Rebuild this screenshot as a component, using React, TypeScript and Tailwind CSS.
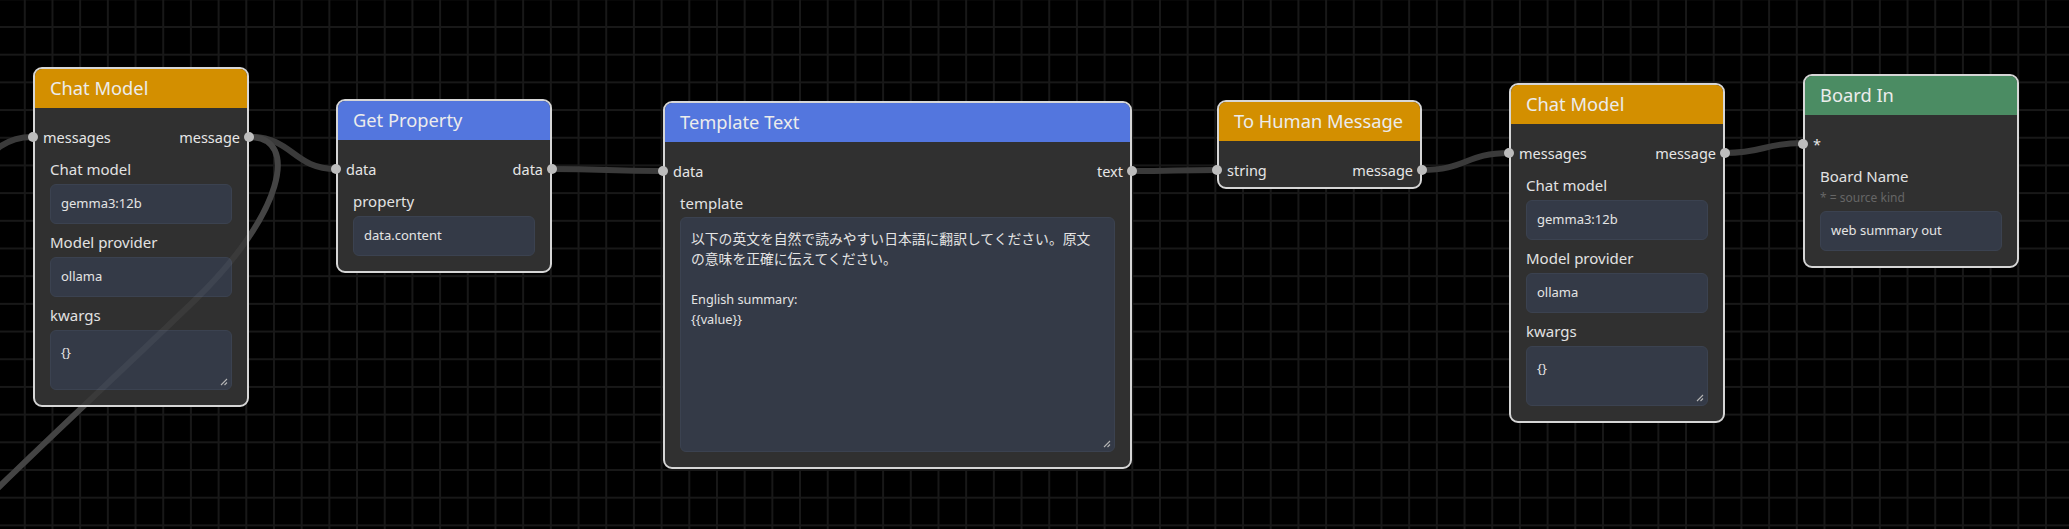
import React from 'react';

type Field = {
  label: string;
  value: string;
  hint?: string;
  area?: 'short' | 'tall';
};

type NodeProps = {
  pos: string;
  header: string;
  title: string;
  inputs?: string;
  outputs?: string;
  fields?: Field[];
  lines?: { text: string; cjk?: boolean }[];
};

const Grip = () => (
  <svg className="absolute right-[3px] bottom-[3px]" width="8" height="8" viewBox="0 0 8 8">
    <path d="M1 7 L7 1 M4.5 7 L7 4.5" stroke="#b5b5b5" strokeWidth="1.1" />
  </svg>
);

const FlowNode: React.FC<NodeProps> = ({ pos, header, title, inputs, outputs, fields, lines }) => {
  const hasBody = (fields && fields.length > 0) || lines;
  return (
    <div
      className={`absolute ${pos} rounded-[9px] border-2 border-[#d6d6d6] bg-[#303030] overflow-visible`}
    >
      <div className={`h-[39px] ${header} rounded-t-[7px] flex items-center px-[15px]`}>
        <span className="text-[18.3px] text-[#ececec] leading-none whitespace-nowrap">{title}</span>
      </div>

      <div className={hasBody ? 'pt-[19px] pb-[15px]' : 'pt-[19px] pb-[7px]'}>
        {/* ports */}
        <div className="relative h-5 flex items-center justify-between text-[14.5px] text-[#e6e6e6]">
          {inputs !== undefined && (
            <>
              <span className="absolute -left-[7px] top-[5px] w-[10px] h-[10px] rounded-full bg-[#bcbcbc]" />
              <span className="pl-[8px] leading-5">{inputs}</span>
            </>
          )}
          {outputs !== undefined ? (
            <>
              <span className="pr-[7px] leading-5 ml-auto">{outputs}</span>
              <span className="absolute -right-[7px] top-[5px] w-[10px] h-[10px] rounded-full bg-[#bcbcbc]" />
            </>
          ) : null}
        </div>

        {fields && (
          <div className="px-[15px]">
            {fields.map((f, i) => (
              <div key={f.label} className={i === 0 ? 'mt-3' : 'mt-2'}>
                <div className="h-5 leading-5 text-[15px] text-[#e2e2e2]">{f.label}</div>
                {f.hint && (
                  <div className="h-4 leading-4 mt-[4px] text-[12px] text-[#666666]">{f.hint}</div>
                )}
                {f.area ? (
                  <div className="relative mt-[5px] h-[60px] rounded-[6px] border border-[#3b4250] bg-[#343a47] pl-[10px] pt-[11px] text-[13px] leading-5 text-[#e4e4e4]">
                    {f.value}
                    <Grip />
                  </div>
                ) : (
                  <div className="mt-[5px] h-10 rounded-[6px] border border-[#3b4250] bg-[#343a47] pl-[10px] flex items-center text-[13px] text-[#e4e4e4]">
                    {f.value}
                  </div>
                )}
              </div>
            ))}
          </div>
        )}

        {lines && (
          <div className="px-[15px]">
            <div className="mt-3 h-5 leading-5 text-[15px] text-[#e2e2e2]">template</div>
            <div className="relative mt-[4px] h-[235px] rounded-[6px] border border-[#3b4250] bg-[#343a47] pl-[10px] pt-[11px] text-[#e4e4e4]">
              {lines.map((l, i) => (
                <div key={i} className={l.cjk ? 'h-5 leading-5 text-[13.8px]' : 'h-5 leading-5 text-[12.7px]'}>
                  {l.text}
                </div>
              ))}
              <Grip />
            </div>
          </div>
        )}
      </div>
    </div>
  );
};

const chatFields: Field[] = [
  { label: 'Chat model', value: 'gemma3:12b' },
  { label: 'Model provider', value: 'ollama' },
  { label: 'kwargs', value: '{}', area: 'short' },
];

const templateLines = [
  { text: '以下の英文を自然で読みやすい日本語に翻訳してください。原文', cjk: true },
  { text: 'の意味を正確に伝えてください。', cjk: true },
  { text: '' },
  { text: 'English summary:' },
  { text: '{{value}}' },
];

const edges = [
  'M-90,205 C-20,205 -25,137 32,137',
  'M250,137 C293,137 293,169 336,169',
  'M250,137 C300,137 283,215 195,300 S30,455 -50,535',
  'M552,169 C607,169 607,171 663,171',
  'M1132,171 C1175,171 1175,170 1217,170',
  'M1422,170 C1466,170 1466,153 1509,153',
  'M1725,153 C1764,153 1764,143 1803,143',
];

export default function App() {
  return (
    <div className="relative w-[2069px] h-[529px] overflow-hidden bg-black font-['Noto_Sans','Noto_Sans_CJK_JP',sans-serif] bg-[linear-gradient(to_right,#181818_1.5px,transparent_1.5px),linear-gradient(to_bottom,#181818_1.5px,transparent_1.5px)] [background-size:27.7px_27.7px] [background-position:23.8px_26px]">
      {/* connections */}
      <svg className="absolute inset-0 pointer-events-none" width="2069" height="529">
        {edges.map((d, i) => (
          <path key={i} d={d} fill="none" stroke="#3a3a3a" strokeWidth="6" strokeLinecap="round" />
        ))}
      </svg>

      <FlowNode
        pos="left-[33px] top-[67px] w-[216px]"
        header="bg-[#d38f00]"
        title="Chat Model"
        inputs="messages"
        outputs="message"
        fields={chatFields}
      />
      <FlowNode
        pos="left-[336px] top-[99px] w-[216px]"
        header="bg-[#5376de]"
        title="Get Property"
        inputs="data"
        outputs="data"
        fields={[{ label: 'property', value: 'data.content' }]}
      />
      <FlowNode
        pos="left-[663px] top-[101px] w-[469px]"
        header="bg-[#5376de]"
        title="Template Text"
        inputs="data"
        outputs="text"
        lines={templateLines}
      />
      <FlowNode
        pos="left-[1217px] top-[100px] w-[205px]"
        header="bg-[#d38f00]"
        title="To Human Message"
        inputs="string"
        outputs="message"
      />
      <FlowNode
        pos="left-[1509px] top-[83px] w-[216px]"
        header="bg-[#d38f00]"
        title="Chat Model"
        inputs="messages"
        outputs="message"
        fields={chatFields}
      />
      <FlowNode
        pos="left-[1803px] top-[74px] w-[216px]"
        header="bg-[#4b8c63]"
        title="Board In"
        inputs="*"
        fields={[{ label: 'Board Name', value: 'web summary out', hint: '* = source kind' }]}
      />

      {/* edge seen through the first node */}
      <svg className="absolute inset-0 pointer-events-none" width="2069" height="529">
        <path
          d="M250,137 C300,137 283,215 195,300 S30,455 -50,535"
          fill="none"
          stroke="#ffffff"
          strokeOpacity="0.05"
          strokeWidth="6"
        />
      </svg>
    </div>
  );
}
